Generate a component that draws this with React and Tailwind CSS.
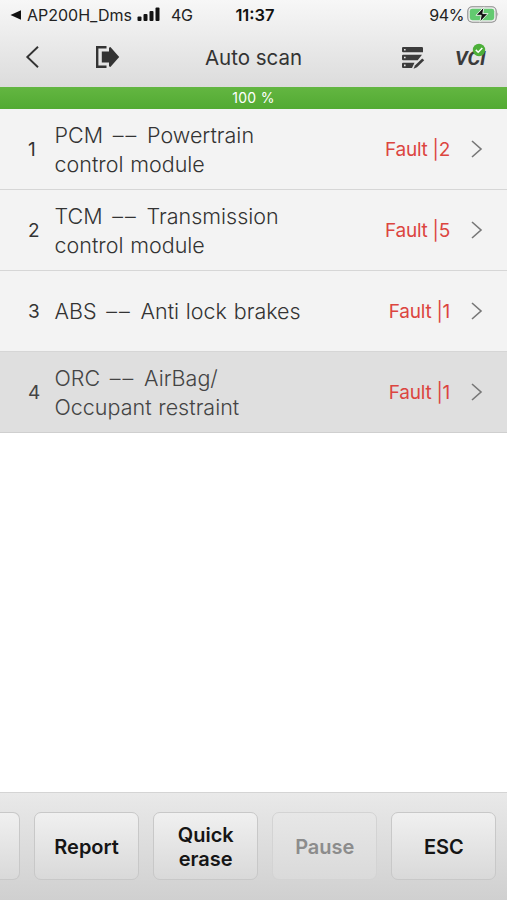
import React from 'react';
import clsx from 'clsx';

const MODULES = [
  { id: 1, code: 'PCM', lines: ['Powertrain', 'control module'], faults: 2 },
  { id: 2, code: 'TCM', lines: ['Transmission', 'control module'], faults: 5 },
  { id: 3, code: 'ABS', lines: ['Anti lock brakes'], faults: 1 },
  { id: 4, code: 'ORC', lines: ['AirBag/', 'Occupant restraint'], faults: 1, active: true },
];

const ACTIONS = [
  { lines: ['Report'] },
  { lines: ['Quick', 'erase'] },
  { lines: ['Pause'], disabled: true },
  { lines: ['ESC'] },
];

const ExitIcon = () => (
  <svg width="25" height="24" viewBox="0 0 25 24" className="block">
    <path d="M11.5 2.2H2.2v19.6h9.3" fill="none" stroke="#333" strokeWidth="2.4" />
    <path d="M6.8 6.5h7.2V2.8l1.4-.8L24.2 12l-8.8 10-1.4-.8v-3.7H6.8z" fill="#333" />
  </svg>
);

const LogIcon = () => (
  <svg width="24" height="24" viewBox="0 0 24 24" className="block">
    <path d="M1.8 1h19.4l.8.8v4.4H1.8L1 5.4V1.8zM1.8 8.8H21l-4.3 5.4H1.8l-.8-.8V9.6zM1.8 16.8h11.7L11 22H1.8l-.8-.8v-3.6z" fill="#3b3b3b" />
    <path d="M21.2 12.5l2 1.8-7.2 7-3.4 1.5 1.3-3.2z" fill="#3b3b3b" />
    <path d="M3 2.9h1.6v1.6H3zM3 10.7h1.6v1.6H3zM3 18.6h1.6v1.6H3z" fill="#e3e3e3" />
  </svg>
);

const VciIcon = () => (
  <div className="relative h-[28px] w-[34px]">
    <span className="absolute left-px top-[3px] font-['Roboto',sans-serif] text-[20px] leading-[24px] font-bold italic tracking-[-0.1px] text-[#3b3b3b]">
      VCI
    </span>
    <svg width="14" height="14" viewBox="0 0 14 14" className="absolute left-[18px] top-0">
      <circle cx="7" cy="7" r="6.2" fill="#4caf39" />
      <path d="M3.8 6.9l2.4 2.4 4.1-4.3" fill="none" stroke="#fff" strokeWidth="1.5" />
    </svg>
  </div>
);

const StatusBar = () => (
  <div className="grid h-[29px] grid-cols-[1fr_auto_1fr] items-center pl-[10px] pr-[7px] text-[16px] leading-[20px] text-[#222]">
    <div className="flex items-center">
      <svg width="11" height="10" viewBox="0 0 11 10">
        <path d="M11 .3v9.4L.5 5z" fill="#111" />
      </svg>
      <span className="ml-[6px] w-[105px] whitespace-nowrap text-[16px]">AP200H_Dms</span>
      <svg width="24" height="15" viewBox="0 0 24 15" className="ml-[5px]">
        <rect x="0.5" y="9.5" width="4" height="4.5" rx="1" fill="#111" />
        <rect x="6.5" y="7" width="4" height="7" rx="1" fill="#111" />
        <rect x="12.5" y="4" width="4" height="10" rx="1" fill="#111" />
        <rect x="18.5" y="0.5" width="4" height="13.5" rx="1" fill="#111" />
      </svg>
      <span className="ml-[10px] tracking-[-0.3px]">4G</span>
    </div>
    <span className="text-[16.5px] font-semibold text-[#111]">11:37</span>
    <div className="flex items-center justify-end">
      <span className="tracking-[-0.4px]">94%</span>
      <svg width="33" height="18" viewBox="0 0 33 18" className="ml-[3px]">
        <rect x="0.8" y="0.8" width="28.4" height="15.4" rx="4.4" fill="#eee" stroke="#8c8c8c" strokeWidth="1.1" />
        <rect x="2.8" y="2.8" width="24.4" height="11.4" rx="2.4" fill="#62ca70" />
        <path d="M30.5 6.3q1.8 2.2 0 4.4z" fill="#8c8c8c" />
        <path d="M17 .9L9 9.3h5.2l-1.4 6.9L21 7.6h-5.2z" fill="#111" stroke="#e4f3e5" strokeWidth="1" />
      </svg>
    </div>
  </div>
);

const Header = () => (
  <div className="grid h-[58px] grid-cols-[1fr_auto_1fr] items-center pb-[2px]">
    <div className="flex items-center pl-[25px]">
      <svg width="15" height="24" viewBox="0 0 15 24">
        <path d="M13 1.8L2.3 12 13 22.2" fill="none" stroke="#333" strokeWidth="1.9" />
      </svg>
      <div className="ml-[55px]">
        <ExitIcon />
      </div>
    </div>
    <h1 className="pt-[2px] text-[20.5px] leading-[28px] text-[#333]">Auto scan</h1>
    <div className="flex items-center justify-end pr-[19px]">
      <div className="pt-[2px]">
        <LogIcon />
      </div>
      <div className="ml-[29px]">
        <VciIcon />
      </div>
    </div>
  </div>
);

const ModuleRow = ({ item }) => (
  <div
    className={clsx(
      'flex h-[81px] items-center border-b pl-[28px] pr-[24px] pt-[2px]',
      item.active ? 'border-[#cfcfcf] bg-[#dfdfdf] text-[#444]' : 'border-[#d6d6d6] bg-[#f3f3f3] text-[#333]'
    )}
  >
    <span className="w-[26.5px] text-[19px] leading-[24px]">{item.id}</span>
    <div className="flex-1 text-[21.5px] leading-[29.5px] font-[340] [word-spacing:0.7px]">
      {item.lines.map((line, index) => (
        <div key={line} className="whitespace-nowrap">
          {index === 0 && (
            <>
              {item.code}
              <span className="ml-[1px] tracking-[2px]"> –– </span>
            </>
          )}
          {line}
        </div>
      ))}
    </div>
    <span className="text-[19px] leading-[24px] tracking-[-0.25px] text-[#dc453f]">Fault |{item.faults}</span>
    <svg width="13" height="18" viewBox="0 0 13 18" className="mb-[2px] ml-[20px]">
      <path d="M2 1L11 9l-9 8" fill="none" stroke="#777" strokeWidth="1.6" />
    </svg>
  </div>
);

const ActionButton = ({ action }) => (
  <button
    disabled={action.disabled}
    className={clsx(
      'flex h-[68px] w-[105px] shrink-0 flex-col items-center justify-center rounded-[7px] border pt-[2px] text-[20px] leading-[24px] font-semibold',
      action.disabled
        ? 'border-[#d3d3d3] bg-linear-to-b from-[#e7e7e7] to-[#dadada] text-[#8c8c8c]'
        : 'border-[#c8c8c8] bg-linear-to-b from-[#f0f0f0] to-[#d9d9d9] text-[#151515]'
    )}
  >
    {action.lines.map((line) => (
      <span key={line}>{line}</span>
    ))}
  </button>
);

const App = () => (
  <div className="flex h-[900px] w-[507px] flex-col overflow-hidden bg-white font-['Inter',sans-serif]">
    <div className="bg-linear-to-b from-[#f7f7f7] to-[#dcdcdc]">
      <StatusBar />
      <Header />
    </div>

    {/* Scan progress */}
    <div className="flex h-[22px] items-center justify-center bg-linear-to-b from-[#63b641] to-[#52aa32] text-[14px] leading-[20px] tracking-[0.3px] text-white">
      100 %
    </div>

    <div className="flex-1">
      {MODULES.map((item) => (
        <ModuleRow key={item.id} item={item} />
      ))}
    </div>

    <div className="flex h-[108px] gap-[14.1px] border-t border-[#d4d4d4] bg-linear-to-b from-[#e9e9e9] to-[#d0d0d0] pt-[19px]">
      <div className="h-[68px] w-[20px] shrink-0 rounded-r-[7px] border border-l-0 border-[#c8c8c8] bg-linear-to-b from-[#f0f0f0] to-[#d9d9d9]" />
      {ACTIONS.map((action) => (
        <ActionButton key={action.lines[0]} action={action} />
      ))}
    </div>
  </div>
);

export default App;
